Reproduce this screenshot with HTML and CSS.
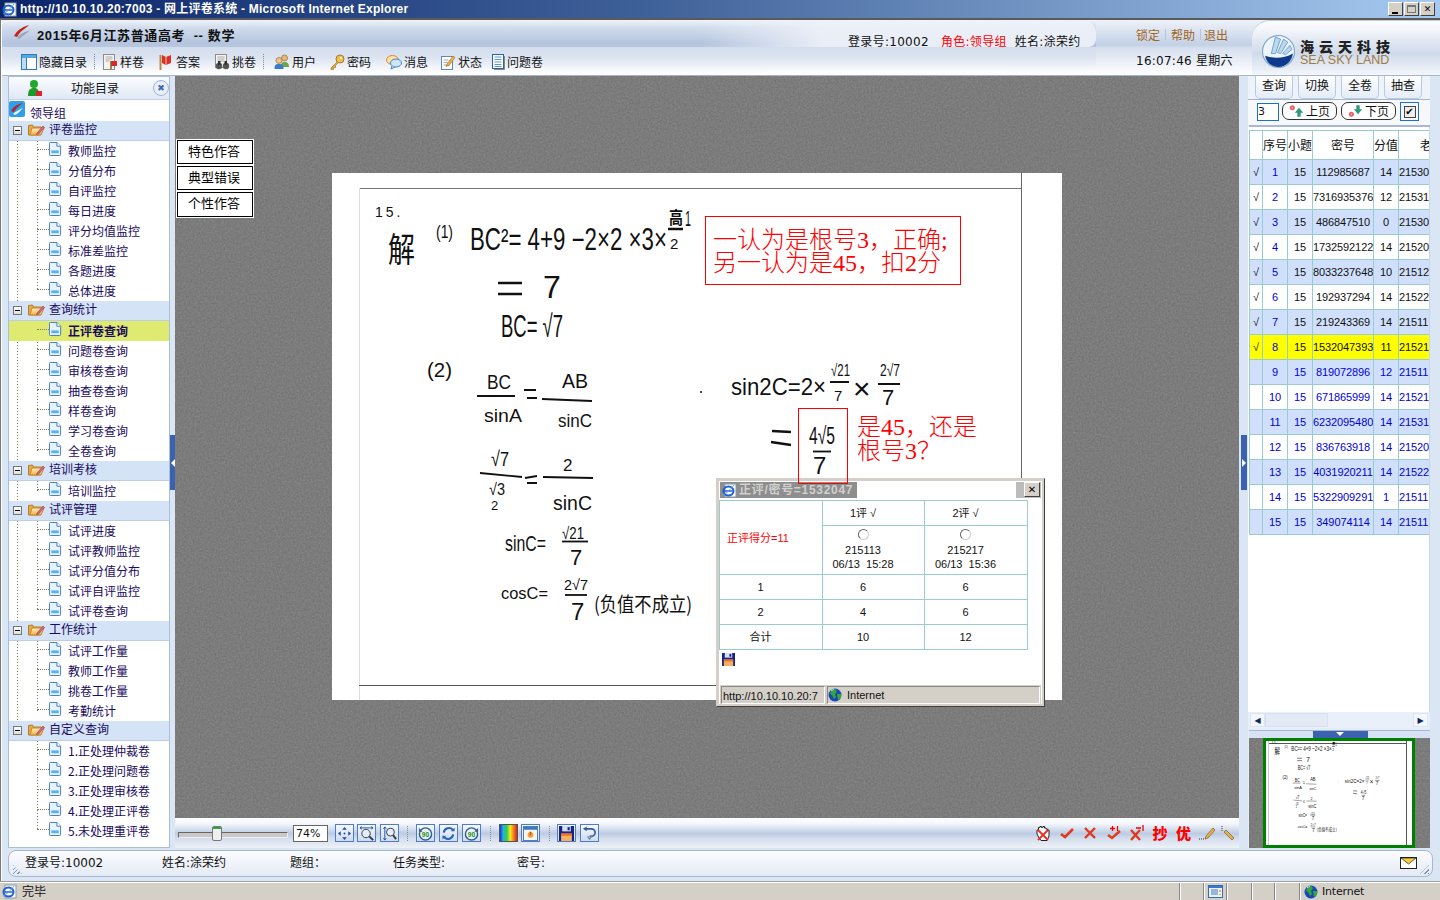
FILE: index.html
```html
<!DOCTYPE html>
<html lang="zh-CN">
<head>
<meta charset="utf-8">
<title>网上评卷系统</title>
<link rel="stylesheet" href="styles.css">
</head>
<body>
<svg class="sprite" aria-hidden="true">
<defs>
<linearGradient id="fo" x1="0" y1="0" x2="0" y2="1"><stop offset="0" stop-color="#fff1b8"/><stop offset="1" stop-color="#f2b04a"/></linearGradient>
<symbol id="doc" viewBox="0 0 14 15"><path d="M1.5.5h7l4 4v9a1 1 0 0 1-1 1h-10a1 1 0 0 1-1-1v-12a1 1 0 0 1 1-1z" fill="#e8f2fc" stroke="#3f78bd"/><path d="M8.500.5v4h4" fill="#fff" stroke="#3f78bd"/><rect x="2.500" y="9" width="8" height="3" fill="#58b0ec"/></symbol>
<symbol id="folder" viewBox="0 0 17 15"><path d="M.5 3.500v9.500h12l1-8h-8l-1-2z" fill="#e9a94a" stroke="#b77a25"/><path d="M2 13l2-7h12l-3 7z" fill="url(#fo)" stroke="#c68a34"/><path d="M9 11l6-7 1.500 1.500-6 6.500-2 .5z" fill="#d75fa8" stroke="#8a4a20" stroke-width=".6"/></symbol>
<symbol id="ie" viewBox="0 0 15 15"><rect x="3" y="1" width="11" height="13" fill="#fff" stroke="#8a97aa"/><ellipse cx="6.500" cy="8" rx="5" ry="4.500" fill="none" stroke="#1c5fd0" stroke-width="2"/><path d="M2.500 8h8" stroke="#1c5fd0" stroke-width="1.500"/><path d="M1 12c3-1 8-6 11-10" fill="none" stroke="#5fa0ee"/></symbol>
<symbol id="globe" viewBox="0 0 14 14"><circle cx="7" cy="7" r="6.500" fill="#1c46b8"/><path d="M3 3l4-2 2 2-2 3 1 3-2 2-2-4-2-1zM9 6l4 0 0 4-3 2z" fill="#31a83a"/><path d="M3 2.500l3-1" stroke="#bfe2ff"/></symbol>
<symbol id="save" viewBox="0 0 14 14"><rect x="0" y="0" width="14" height="14" fill="#14268e"/><rect x="3" y="0" width="8" height="5" fill="#d8e0ee"/><rect x="8" y="1" width="2" height="3" fill="#14268e"/><rect x="2" y="7" width="10" height="7" fill="#f7b05f"/><rect x="2" y="7" width="10" height="2" fill="#f36b1e"/></symbol>
<symbol id="swoosh" viewBox="0 0 18 16"><path d="M1 12C5 5 10 3 16 1 12 5 7 7 4 13z" fill="#c8201c"/><path d="M4 14C8 9 12 8 17 6 13 10 9 12 6 15z" fill="#9aa4b4"/></symbol>
</defs>
</svg>

<header class="ie-title">
  <svg class="ic15"><use href="#ie"/></svg>
  <span class="ie-title-text">http://10.10.10.20:7003 - 网上评卷系统 - Microsoft Internet Explorer</span>
  <div class="winbtns">
    <span class="winbtn"><i class="g-min"></i></span>
    <span class="winbtn"><i class="g-max"></i></span>
    <span class="winbtn g-close">✕</span>
  </div>
</header>

<div class="app">
  <div class="top">
    <div class="top-left">
      <div class="title-row">
        <svg class="t-logo"><use href="#swoosh"/></svg>
        <strong class="exam">2015年6月江苏普通高考 &nbsp;-- 数学</strong>
        <div class="who">
          <span>登录号:10002</span>
          <span class="red">角色:领导组</span>
          <span>姓名:涂荣约</span>
        </div>
      </div>
      <nav class="tool-row">
        <a class="tl w1"><svg viewBox="0 0 16 16"><rect x=".5" y=".5" width="15" height="15" fill="#fff" stroke="#2a7bc0"/><rect x="1" y="1" width="14" height="3" fill="#5aa7df"/><rect x="1" y="4" width="4" height="11" fill="#bcdcf4"/><path d="M5.500 4v11" stroke="#2a7bc0"/></svg>隐藏目录</a>
        <i class="tsep s1"></i>
        <a class="tl w2"><svg viewBox="0 0 16 16"><rect x="1.500" y=".5" width="11" height="15" fill="#f3f3ef" stroke="#8c8c8c"/><path d="M3.500 3h7M3.500 5h7M3.500 7h4" stroke="#aaa"/><path d="M9 7h6v5H9z" fill="#d8282a"/><path d="M9 7v8" stroke="#8a5a20" stroke-width="1.500"/></svg>样卷</a>
        <a class="tl w3"><svg viewBox="0 0 14 16"><path d="M1.500 1v15" stroke="#b98a45" stroke-width="2"/><path d="M3 1l4 2 5-2v8l-5 2-4-2z" fill="#d8322a"/><path d="M7 3v8" stroke="#f2c59a"/></svg>答案</a>
        <a class="tl w4"><svg viewBox="0 0 16 16"><rect x="1.500" y=".5" width="11" height="13" fill="#f3f3ef" stroke="#8c8c8c"/><path d="M3.500 3h7M3.500 5h7M3.500 7h7" stroke="#aaa"/><circle cx="5" cy="12" r="3.200" fill="#555"/><circle cx="12" cy="12" r="3.200" fill="#555"/><rect x="4" y="7" width="2.500" height="4" fill="#333"/><rect x="10.500" y="7" width="2.500" height="4" fill="#333"/></svg>挑卷</a>
        <i class="tsep s2"></i>
        <a class="tl w5"><svg viewBox="0 0 16 16"><circle cx="10.500" cy="4" r="3" fill="#e9b878" stroke="#8a5a20" stroke-width=".6"/><path d="M7 13c0-4 1-5 3.500-5s4.500 1 4.500 5z" fill="#6aa84a"/><circle cx="5" cy="6.500" r="3" fill="#f0c68e" stroke="#8a5a20" stroke-width=".6"/><path d="M.5 15c0-4 1-5 4.500-5s4.500 1 4.500 5z" fill="#3a7bd0"/></svg>用户</a>
        <a class="tl w6"><svg viewBox="0 0 16 16"><circle cx="11" cy="5" r="4" fill="#f1bf4d" stroke="#a8782a"/><circle cx="12" cy="4" r="1" fill="#fff"/><path d="M8 8l-6 6v1.500h2.500v-2h2v-2l3-3" fill="#e8a83a" stroke="#a8782a" stroke-width=".7"/></svg>密码</a>
        <a class="tl w7"><svg viewBox="0 0 16 16"><ellipse cx="6.500" cy="6" rx="6" ry="4.500" fill="#fde1a8" stroke="#d88a3a"/><ellipse cx="10" cy="9" rx="5.500" ry="4" fill="#cfe6fa" stroke="#3a86c8"/><path d="M6 12l-1 3 4-2" fill="#cfe6fa" stroke="#3a86c8"/></svg>消息</a>
        <a class="tl w8"><svg viewBox="0 0 16 16"><rect x="1.500" y="2.500" width="11" height="13" fill="#fff" stroke="#5a8ac0"/><path d="M3.500 6h5M3.500 8.500h4M3.500 11h6" stroke="#9ab"/><path d="M7 10l6-8 2 1.500-6 8-3 1z" fill="#f0b040" stroke="#a86a20" stroke-width=".6"/></svg>状态</a>
        <a class="tl w9"><svg viewBox="0 0 13 16"><rect x=".5" y=".5" width="11" height="14" fill="#fff" stroke="#2a62a8"/><path d="M2.500 3h7M2.500 5.500h7M2.500 8h7M2.500 10.500h7M2.500 12.500h7" stroke="#5a98d8"/><path d="M12.500 2v13.500H2" fill="none" stroke="#888"/></svg>问题卷</a>
      </nav>
    </div>
    <div class="top-right">
      <div class="clock-col">
        <div class="links"><a>锁定</a><i></i><a>帮助</a><i></i><a class="lk-last">退出</a></div>
        <div class="clock">16:07:46 星期六</div>
      </div>
      <div class="brand">
        <svg class="brand-mark" viewBox="0 0 32 33"><circle cx="16" cy="17" r="15.500" fill="#eef4fb" stroke="#7aa0c8"/><path d="M9 19L13 3l5 2-5 14zM15 18l6-13 4 3-7 11zM20 19l7-8 2 4-6 5z" fill="#bcd8ee" stroke="#4a8cc0" stroke-width=".7"/><path d="M3 21c8 3 18 3 27-2-1 8-7 13-14 13S4 27 3 21z" fill="#0d3a8a"/></svg>
        <div class="brand-txt"><b>海云天科技</b><span>SEA SKY LAND</span></div>
      </div>
    </div>
  </div>

  <div class="main">
    <aside class="side">
      <div class="side-head">
        <svg class="side-ic" viewBox="0 0 16 18"><circle cx="7" cy="5" r="4" fill="#1fa82c"/><path d="M1 17c0-6 2-8 6-8s5 2 5 8z" fill="#1a9a28"/><rect x="9" y="12" width="6" height="5" fill="#d9252a"/></svg>
        <span class="side-title">功能目录</span>
        <span class="side-x">✖</span>
      </div>
      <div class="tree">
        <div class="root"><svg class="root-ic" viewBox="0 0 16 16"><rect width="16" height="16" rx="2" fill="#2f9fe8"/><path d="M2 10C5 5 9 3 14 2 10 5 7 7 5 11z" fill="#b8202a"/><path d="M4 13c3-3 6-4 10-6-3 3-5 6-8 7z" fill="#e8f4fc"/></svg>领导组</div>

        <div class="grp"><i class="exp"></i><svg class="fold"><use href="#folder"/></svg><span>评卷监控</span></div>
        <div class="items">
          <div class="item"><svg class="doc"><use href="#doc"/></svg>教师监控</div>
          <div class="item"><svg class="doc"><use href="#doc"/></svg>分值分布</div>
          <div class="item"><svg class="doc"><use href="#doc"/></svg>自评监控</div>
          <div class="item"><svg class="doc"><use href="#doc"/></svg>每日进度</div>
          <div class="item"><svg class="doc"><use href="#doc"/></svg>评分均值监控</div>
          <div class="item"><svg class="doc"><use href="#doc"/></svg>标准差监控</div>
          <div class="item"><svg class="doc"><use href="#doc"/></svg>各题进度</div>
          <div class="item"><svg class="doc"><use href="#doc"/></svg>总体进度</div>
        </div>

        <div class="grp"><i class="exp"></i><svg class="fold"><use href="#folder"/></svg><span>查询统计</span></div>
        <div class="items">
          <div class="item sel"><svg class="doc"><use href="#doc"/></svg>正评卷查询</div>
          <div class="item"><svg class="doc"><use href="#doc"/></svg>问题卷查询</div>
          <div class="item"><svg class="doc"><use href="#doc"/></svg>审核卷查询</div>
          <div class="item"><svg class="doc"><use href="#doc"/></svg>抽查卷查询</div>
          <div class="item"><svg class="doc"><use href="#doc"/></svg>样卷查询</div>
          <div class="item"><svg class="doc"><use href="#doc"/></svg>学习卷查询</div>
          <div class="item"><svg class="doc"><use href="#doc"/></svg>全卷查询</div>
        </div>

        <div class="grp"><i class="exp"></i><svg class="fold"><use href="#folder"/></svg><span>培训考核</span></div>
        <div class="items">
          <div class="item"><svg class="doc"><use href="#doc"/></svg>培训监控</div>
        </div>

        <div class="grp"><i class="exp"></i><svg class="fold"><use href="#folder"/></svg><span>试评管理</span></div>
        <div class="items">
          <div class="item"><svg class="doc"><use href="#doc"/></svg>试评进度</div>
          <div class="item"><svg class="doc"><use href="#doc"/></svg>试评教师监控</div>
          <div class="item"><svg class="doc"><use href="#doc"/></svg>试评分值分布</div>
          <div class="item"><svg class="doc"><use href="#doc"/></svg>试评自评监控</div>
          <div class="item"><svg class="doc"><use href="#doc"/></svg>试评卷查询</div>
        </div>

        <div class="grp"><i class="exp"></i><svg class="fold"><use href="#folder"/></svg><span>工作统计</span></div>
        <div class="items">
          <div class="item"><svg class="doc"><use href="#doc"/></svg>试评工作量</div>
          <div class="item"><svg class="doc"><use href="#doc"/></svg>教师工作量</div>
          <div class="item"><svg class="doc"><use href="#doc"/></svg>挑卷工作量</div>
          <div class="item"><svg class="doc"><use href="#doc"/></svg>考勤统计</div>
        </div>

        <div class="grp"><i class="exp"></i><svg class="fold"><use href="#folder"/></svg><span>自定义查询</span></div>
        <div class="items last">
          <div class="item"><svg class="doc"><use href="#doc"/></svg>1.正处理仲裁卷</div>
          <div class="item"><svg class="doc"><use href="#doc"/></svg>2.正处理问题卷</div>
          <div class="item"><svg class="doc"><use href="#doc"/></svg>3.正处理审核卷</div>
          <div class="item"><svg class="doc"><use href="#doc"/></svg>4.正处理正评卷</div>
          <div class="item"><svg class="doc"><use href="#doc"/></svg>5.未处理重评卷</div>
        </div>
      </div>
    </aside>

    <div class="handle h-left"><i></i></div>

    <section class="center">
      <div class="stage">
        <svg class="noise" aria-hidden="true"><filter id="nz"><feTurbulence type="fractalNoise" baseFrequency=".55" numOctaves="2" seed="4"/><feColorMatrix values="0 0 0 0 .5  0 0 0 0 .5  0 0 0 0 .5  .9 0 0 0 -.2"/></filter><rect width="100%" height="100%" fill="#747474"/><rect width="100%" height="100%" filter="url(#nz)" opacity=".45"/></svg>

        <div class="answer-btns">
          <button class="abtn">特色作答</button>
          <button class="abtn">典型错误</button>
          <button class="abtn">个性作答</button>
        </div>

        <div class="paper">
          <svg class="scan" viewBox="332 173 730 527">
            <path d="M359 188.500H1022" stroke="#777" fill="none"/>
            <path d="M1021.500 173V480" stroke="#666" fill="none"/>
            <path d="M359.500 188V700" stroke="#ddd" fill="none"/>
            <path d="M359 685.500H722" stroke="#555" fill="none"/>
            <g id="hw" class="hw">
              <text x="375" y="217" font-size="14" letter-spacing="3">15.</text>
              <text x="388" y="262" font-size="34" class="cjk" textLength="27" lengthAdjust="spacingAndGlyphs">解</text>
              <text x="436" y="238" font-size="19" textLength="17" lengthAdjust="spacingAndGlyphs">(1)</text>
              <text x="470" y="250" font-size="31" textLength="197" lengthAdjust="spacingAndGlyphs">BC²= 4+9 −2×2 ×3×</text>
              <text x="669" y="224" font-size="17" class="cjk" font-weight="700" textLength="14" lengthAdjust="spacingAndGlyphs">高</text>
              <text x="670" y="249" font-size="15">2</text>
              <text x="685" y="226" font-size="22" textLength="6" lengthAdjust="spacingAndGlyphs">1</text>
              <path d="M668 229h15M498 283h24M498 294h24" stroke="#111" stroke-width="2.500" fill="none"/>
              <text x="543" y="298" font-size="32">7</text>
              <text x="501" y="337" font-size="31" textLength="62" lengthAdjust="spacingAndGlyphs">BC= √7</text>
              <text x="427" y="377" font-size="21" textLength="25" lengthAdjust="spacingAndGlyphs">(2)</text>

              <text x="487" y="389" font-size="21" textLength="24" lengthAdjust="spacingAndGlyphs">BC</text>
              <text x="484" y="422" font-size="19" textLength="38" lengthAdjust="spacingAndGlyphs">sinA</text>
              <text x="562" y="388" font-size="21" textLength="26" lengthAdjust="spacingAndGlyphs">AB</text>
              <text x="558" y="427" font-size="19" textLength="34" lengthAdjust="spacingAndGlyphs">sinC</text>
              <path d="M477 396h38M524 390h12M527 398h10M542 399l50 2" stroke="#111" stroke-width="1.800" fill="none"/>

              <text x="491" y="466" font-size="21" textLength="18" lengthAdjust="spacingAndGlyphs">√7</text>
              <text x="489" y="495" font-size="17" textLength="16" lengthAdjust="spacingAndGlyphs">√3</text>
              <text x="491" y="510" font-size="13">2</text>
              <text x="563" y="471" font-size="17">2</text>
              <text x="553" y="510" font-size="21" textLength="39" lengthAdjust="spacingAndGlyphs">sinC</text>
              <path d="M480 473l42 4M525 478l12-2M527 483h10M543 477l50 1" stroke="#111" stroke-width="1.800" fill="none"/>

              <text x="505" y="551" font-size="22" textLength="41" lengthAdjust="spacingAndGlyphs">sinC=</text>
              <text x="562" y="539" font-size="17" textLength="22" lengthAdjust="spacingAndGlyphs">√21</text>
              <text x="570" y="565" font-size="22">7</text>
              <path d="M562 541.500h26" stroke="#111" stroke-width="1.800"/>

              <text x="501" y="599" font-size="17" textLength="47" lengthAdjust="spacingAndGlyphs">cosC=</text>
              <text x="564" y="590" font-size="15" textLength="24" lengthAdjust="spacingAndGlyphs">2√7</text>
              <text x="571" y="620" font-size="24">7</text>
              <path d="M565 595h22" stroke="#111" stroke-width="1.800"/>
              <text x="594" y="612" font-size="20" class="cjk" textLength="98" lengthAdjust="spacingAndGlyphs">(负值不成立)</text>

              <text x="731" y="395" font-size="24" textLength="95" lengthAdjust="spacingAndGlyphs">sin2C=2×</text>
              <text x="831" y="376" font-size="17" textLength="19" lengthAdjust="spacingAndGlyphs">√21</text>
              <text x="834" y="401" font-size="15">7</text>
              <text x="853" y="399" font-size="30">×</text>
              <text x="880" y="376" font-size="17" textLength="20" lengthAdjust="spacingAndGlyphs">2√7</text>
              <text x="882" y="405" font-size="22">7</text>
              <path d="M830 382h19M878 384h22" stroke="#111" stroke-width="1.800"/>
              <path d="M772 431l19 1M771 442l20 3" stroke="#111" stroke-width="2.500"/>
              <text x="809" y="444" font-size="24" textLength="26" lengthAdjust="spacingAndGlyphs">4√5</text>
              <text x="813" y="474" font-size="24">7</text>
              <path d="M813 451.500h18" stroke="#111" stroke-width="1.800"/>
              <path d="M700 392h2" stroke="#111" stroke-width="1.500"/>
            </g>
          </svg>
          <div class="note note-a">一认为是根号3，正确;<br>另一认为是45，扣2分</div>
          <div class="note-box"></div>
          <div class="note-free">是45，还是<br>根号3？</div>
        </div>

        <div class="popup">
          <div class="pop-title">
            <div class="pop-cap"><svg class="ic15"><use href="#ie"/></svg><b>正评/密号=1532047</b></div>
            <div class="pop-gap"></div>
            <div class="pop-end"><span class="pop-x">✕</span></div>
          </div>
          <div class="pop-body">
            <table class="pop-table">
              <colgroup><col class="pc"><col class="pc2"><col class="pc"></colgroup>
              <tr class="r25"><td rowspan="2" class="score">正评得分=11</td><td>1评 √</td><td>2评 √</td></tr>
              <tr class="r49"><td><i class="radio"></i><br>215113<br>06/13&nbsp; 15:28</td><td><i class="radio"></i><br>215217<br>06/13&nbsp; 15:36</td></tr>
              <tr class="r25"><td>1</td><td>6</td><td>6</td></tr>
              <tr class="r25"><td>2</td><td>4</td><td>6</td></tr>
              <tr class="r25"><td>合计</td><td>10</td><td>12</td></tr>
            </table>
            <svg class="pop-save"><use href="#save"/></svg>
          </div>
          <div class="pop-status">
            <div class="ps1">http://10.10.10.20:7</div>
            <div class="ps2"><svg class="ic13"><use href="#globe"/></svg>Internet</div>
          </div>
        </div>
      </div>

      <div class="bottom-tools">
        <div class="slider"><i class="thumb"></i></div>
        <div class="zoomval">74%</div>
        <span class="tb"><svg viewBox="0 0 16 16"><path d="M8 1l2.500 3h-5zM8 15l2.500-3h-5zM1 8l3-2.500v5zM15 8l-3-2.500v5z" fill="#1f4ea8"/><circle cx="8" cy="8" r="1" fill="#1f4ea8"/></svg></span>
        <span class="tb"><svg viewBox="0 0 16 16"><circle cx="7.500" cy="8" r="4.500" fill="#e2eefb" stroke="#334"/><path d="M11 11l4 4" stroke="#334" stroke-width="2"/><path d="M1 2h14M1 2l2-1.500M1 2l2 1.500M15 2l-2-1.500M15 2l-2 1.500" stroke="#1f4ea8" fill="none"/></svg></span>
        <span class="tb"><svg viewBox="0 0 16 16"><circle cx="9" cy="6.500" r="4.200" fill="#e2eefb" stroke="#334"/><path d="M12 10l3 4" stroke="#334" stroke-width="2"/><path d="M3 1v14M3 1L1.500 3M3 1l1.500 2M3 15l-1.500-2M3 15l1.500-2" stroke="#1f4ea8" fill="none"/></svg></span>
        <i class="bsep b1"></i>
        <span class="tb"><svg viewBox="0 0 16 16"><circle cx="8" cy="8.500" r="6.500" fill="#e8f5e8" stroke="#345a9c" stroke-width="1.500"/><path d="M1 2v4h4z" fill="#345a9c"/><text x="8" y="11.500" class="rot">90</text></svg></span>
        <span class="tb"><svg viewBox="0 0 16 16"><path d="M3 7a5.500 5.500 0 0 1 9.500-3M13 9a5.500 5.500 0 0 1-9.500 3" fill="none" stroke="#2a62b8" stroke-width="2.200"/><path d="M10.500 5.500h4v-4zM5.500 10.500h-4v4z" fill="#2a62b8"/></svg></span>
        <span class="tb"><svg viewBox="0 0 16 16"><circle cx="8" cy="8.500" r="6.500" fill="#e8f5e8" stroke="#345a9c" stroke-width="1.500"/><path d="M15 2v4h-4z" fill="#345a9c"/><text x="8" y="11.500" class="rot">90</text></svg></span>
        <i class="bsep b2"></i>
        <span class="tb rainbow"></span>
        <span class="tb"><svg viewBox="0 0 16 16"><rect x=".5" y=".5" width="15" height="15" fill="#f6f6ea" stroke="#4a78b8"/><rect x="1" y="1" width="14" height="3" fill="#3a78c8"/><circle cx="8" cy="9.500" r="3" fill="#f2a03a"/><path d="M8 6v4" stroke="#c8501a" stroke-width="1.500"/></svg></span>
        <i class="bsep b3"></i>
        <span class="tb"><svg viewBox="0 0 14 14"><use href="#save"/></svg></span>
        <span class="tb"><svg viewBox="0 0 16 16"><path d="M4 3h6a4 4 0 0 1 0 8H8" fill="none" stroke="#345a9c" stroke-width="1.800"/><path d="M5 .5v5L1 3z" fill="#345a9c"/><path d="M6 11l2 3 3-4" fill="none" stroke="#789" stroke-width="1.500"/></svg></span>

        <div class="marks">
          <svg class="mk16" viewBox="0 0 16 16"><path d="M2 9V5h1.500V2.500H5V1.500h1.500v1H8v-1h1.500v1.500H11V4h1.500v1H14v6l-2 4.500H6L3.500 12z" fill="#fff" stroke="#222"/><path d="M3 5l10 10M13 5L3 15" stroke="#e8322a" stroke-width="2"/></svg>
          <svg class="mk16" viewBox="0 0 16 16"><path d="M2 9l4 3 8-8" fill="none" stroke="#e03a1c" stroke-width="2.600"/></svg>
          <svg class="mk16" viewBox="0 0 16 16"><path d="M3 3l10 10M13 3L3 13" stroke="#e03a1c" stroke-width="2.400"/></svg>
          <svg class="mk16" viewBox="0 0 16 16"><path d="M2 10l4 3 8-7" fill="none" stroke="#e03a1c" stroke-width="2.400"/><path d="M4 3.500h5M6.500 1v5M11.500 1v5" stroke="#e00" stroke-width="1.300"/></svg>
          <svg class="mk16" viewBox="0 0 16 16"><path d="M2 5l9 10M11 5L2 15" stroke="#e03a1c" stroke-width="2.400"/><path d="M7 3h5M14 0v6" stroke="#e00" stroke-width="1.300"/></svg>
          <b class="mk-t">抄</b>
          <b class="mk-t">优</b>
          <svg class="mk16 mk-pen" viewBox="0 0 16 16"><path d="M7 11l7-8 2 2-7 8-3 1z" fill="#e8b04a" stroke="#7a5a2a" stroke-width=".7"/><path d="M0 14h5" stroke="#333" stroke-dasharray="1 1"/></svg>
          <svg class="mk16 mk-pen" viewBox="0 0 16 16"><path d="M2 1v6" stroke="#333" stroke-dasharray="1 1"/><path d="M4 7l2-2 8 8-2 2z" fill="#e8b04a" stroke="#7a5a2a" stroke-width=".7"/></svg>
        </div>
      </div>
    </section>

    <div class="handle h-right"><i></i></div>

    <aside class="right">
      <div class="tabs"><span class="tab">查询</span><span class="tab">切换</span><span class="tab">全卷</span><span class="tab">抽查</span></div>
      <div class="pager">
        <span class="pg-in">3</span>
        <span class="pg-btn"><svg viewBox="0 0 18 16"><circle cx="4" cy="4" r="3" fill="#e65a78"/><circle cx="4" cy="4" r="1" fill="#f2d23a"/><path d="M12 4l5 6h-3v5h-4v-5H7z" fill="#2c9a7a"/></svg>上页</span>
        <span class="pg-btn"><svg viewBox="0 0 18 16"><circle cx="4" cy="12" r="3" fill="#e65a78"/><circle cx="4" cy="12" r="1" fill="#f2d23a"/><path d="M12 12l5-6h-3V1h-4v5H7z" fill="#2c9a7a"/></svg>下页</span>
        <span class="pg-chk"><i>✔</i></span>
      </div>
      <div class="rbar"></div>
      <div class="table-wrap">
        <table class="list">
          <colgroup><col class="c1"><col class="c2"><col class="c2"><col class="c3"><col class="c2"><col class="c4"></colgroup>
          <thead><tr><th></th><th>序号</th><th>小题</th><th>密号</th><th>分值</th><th class="teach">老师</th></tr></thead>
          <tbody>
            <tr class="odd"><td>√</td><td class="bl">1</td><td>15</td><td>112985687</td><td>14</td><td class="l">21530</td></tr>
            <tr><td>√</td><td class="bl">2</td><td>15</td><td>7316935376</td><td>12</td><td class="l">21531</td></tr>
            <tr class="odd"><td>√</td><td class="bl">3</td><td>15</td><td>486847510</td><td>0</td><td class="l">21530</td></tr>
            <tr><td>√</td><td class="bl">4</td><td>15</td><td>1732592122</td><td>14</td><td class="l">21520</td></tr>
            <tr class="odd"><td>√</td><td class="bl">5</td><td>15</td><td>8033237648</td><td>10</td><td class="l">21512</td></tr>
            <tr><td>√</td><td class="bl">6</td><td>15</td><td>192937294</td><td>14</td><td class="l">21522</td></tr>
            <tr class="odd"><td>√</td><td class="bl">7</td><td>15</td><td>219243369</td><td>14</td><td class="l">21511</td></tr>
            <tr class="cur"><td>√</td><td class="bl">8</td><td>15</td><td>1532047393</td><td>11</td><td class="l">21521</td></tr>
            <tr class="odd todo"><td></td><td>9</td><td>15</td><td>819072896</td><td>12</td><td class="l">21511</td></tr>
            <tr class="todo"><td></td><td>10</td><td>15</td><td>671865999</td><td>14</td><td class="l">21521</td></tr>
            <tr class="odd todo"><td></td><td>11</td><td>15</td><td>6232095480</td><td>14</td><td class="l">21531</td></tr>
            <tr class="todo"><td></td><td>12</td><td>15</td><td>836763918</td><td>14</td><td class="l">21520</td></tr>
            <tr class="odd todo"><td></td><td>13</td><td>15</td><td>4031920211</td><td>14</td><td class="l">21522</td></tr>
            <tr class="todo"><td></td><td>14</td><td>15</td><td>5322909291</td><td>1</td><td class="l">21511</td></tr>
            <tr class="odd todo"><td></td><td>15</td><td>15</td><td>349074114</td><td>14</td><td class="l">21511</td></tr>
          </tbody>
        </table>
      </div>
      <div class="hscroll">
        <span class="sb-btn">◀</span><span class="sb-thumb"></span><span class="sb-fill"></span><span class="sb-btn">▶</span>
      </div>
      <div class="split"><i></i></div>
      <div class="thumbview">
        <svg class="noise" aria-hidden="true"><rect width="100%" height="100%" fill="#747474"/><rect width="100%" height="100%" filter="url(#nz)" opacity=".45"/></svg>
        <div class="thumbframe">
          <svg class="mini" viewBox="1266 741 146 104">
            <path d="M1269 743.500H1407M1406.500 741V845" stroke="#555" fill="none"/>
            <path d="M1268.500 741V845" stroke="#ccc" fill="none"/>
            <g transform="translate(1195,696) scale(.205,.22)"><use href="#hw"/></g>
          </svg>
        </div>
      </div>
    </aside>
  </div>

  <footer class="info">
    <span class="grip"></span>
    <span class="i1">登录号:10002</span>
    <span class="i2">姓名:涂荣约</span>
    <span class="i3">题组：</span>
    <span class="i4">任务类型:</span>
    <span class="i5">密号:</span>
    <svg class="mail" viewBox="0 0 17 12"><rect x=".5" y=".5" width="16" height="11" fill="#fff" stroke="#222"/><path d="M1 1l7.500 6L16 1z" fill="#f4cf3a" stroke="#222" stroke-width=".7"/></svg>
    <span class="grip"></span>
  </footer>
</div>

<div class="ie-status">
  <svg class="ic15"><use href="#ie"/></svg>
  <span class="done">完毕</span>
  <span class="sp p1"></span>
  <span class="sp p2"><svg viewBox="0 0 15 13"><rect x=".5" y=".5" width="14" height="12" fill="#e8f0fb" stroke="#3a6ab0"/><rect x="1" y="1" width="13" height="2" fill="#3a78c8"/><path d="M3 5h7M3 7h7M3 9h7" stroke="#4a78b8"/><path d="M12 5v2M12 9v1" stroke="#e89a1a" stroke-width="1.500"/></svg></span>
  <span class="sp p3"></span>
  <span class="sp p4"></span>
  <span class="sp p5"></span>
  <span class="sp p6"><svg class="ic13"><use href="#globe"/></svg>Internet</span>
</div>
</body>
</html>
```

FILE: styles.css
```css
*{box-sizing:border-box}
html,body{margin:0;height:100%}
body{width:1440px;height:900px;overflow:hidden;display:flex;flex-direction:column;font:12px/1.2 "DejaVu Sans","Noto Sans CJK SC",sans-serif;color:#111;background:#d4d0c8}
.sprite{position:absolute;width:0;height:0}
.ic15{width:15px;height:15px;flex:none}
.ic13{width:14px;height:14px;flex:none}

/* IE chrome */
.ie-title{height:18px;flex:none;display:flex;align-items:center;padding-left:2px;gap:3px;background:linear-gradient(90deg,#0a246a 0,#3f6199 45%,#a6caf0 100%);color:#fff}
.ie-title-text{font:700 12px/1 "Liberation Sans","Noto Sans CJK SC",sans-serif;letter-spacing:.23px}
.winbtns{margin-left:auto;margin-right:5px;display:flex;gap:1px}
.winbtn{width:15px;height:14px;background:#d4d0c8;border:1px solid;border-color:#fff #404040 #404040 #fff;display:flex;align-items:center;justify-content:center;color:#000;position:relative}
.g-min{width:6px;height:2px;background:#000;margin-top:7px;margin-right:2px}
.g-max{width:9px;height:8px;border:1px solid #777;border-top-width:2px}
.g-close{font:700 9px/1 "DejaVu Sans",sans-serif}

.app{flex:1;display:flex;flex-direction:column;background:#dbe6f5;border-top:2px solid #5a5a5a;border-left:1px solid #777;box-shadow:inset 1px 0 #fff;min-height:0;height:862px}
.top{height:56px;flex:none;display:flex;border-bottom:1px solid #a7b5cb;margin-left:1px}
.top-left{width:1094px;display:flex;flex-direction:column}
.title-row{height:27px;display:flex;align-items:center;background:linear-gradient(#eff3fa 0,#d0dbec 30%,#b5c5df 85%,#b8c7e0 100%);position:relative;padding-left:11px}
.title-row::after{content:"";position:absolute;left:700px;right:0;top:1px;bottom:0;background:linear-gradient(90deg,transparent,#eef2f9 30%,#eef2f9);border-radius:0 12px 8px 0;opacity:.9}
.t-logo{width:18px;height:16px;margin-top:-3px}
.exam{margin:3px 0 0 6px;font:700 13px/1 "Liberation Sans","Noto Sans CJK SC",sans-serif;letter-spacing:.62px}
.who{position:absolute;z-index:1;left:846px;top:15px;display:flex;gap:12px;white-space:nowrap;letter-spacing:.3px}
.who span:last-child{margin-left:-4px}
.red{color:#f00}
.tool-row{height:28px;display:flex;align-items:center;position:relative;background:linear-gradient(#d3ddec 0,#dbe3f0 35%,#fdfdfe 92%,#fff 100%)}
.tl{position:absolute;top:7px;display:flex;align-items:center;gap:2px;white-space:nowrap;font:12px/16px "Noto Sans CJK SC",sans-serif;color:#111}
.tl svg{width:16px;height:16px;flex:none;margin-top:-1px}
.w1{left:19px}.w2{left:100px}.w3{left:156px}.w4{left:212px}.w5{left:272px}.w6{left:327px}.w7{left:384px}.w8{left:438px}.w9{left:490px}
.w9 svg{width:13px}
.tsep{position:absolute;top:7px;height:15px;border-left:1px dotted #889}
.s1{left:92px}.s2{left:261px}

.top-right{flex:1;display:flex;position:relative;background:linear-gradient(#eef2f9 0,#c3d1e6 45%,#d7e0ee 52%,#fbfcfe 96%,#fff 100%)}
.clock-col{width:156px;padding:7px 0 0 40px;flex:none}
.links{display:flex;align-items:center;gap:5px;height:15px;font:12px/15px "Noto Sans CJK SC",sans-serif;color:#a0651c;white-space:nowrap}
.links i{width:1px;height:11px;background:#b8c3d8}
.lk-last{margin-left:-2px}
.clock{margin-top:12px;white-space:nowrap;font-size:12px;letter-spacing:.25px}
.brand{flex:1;display:flex;gap:5px;padding:13px 0 0 10px;border-top-left-radius:18px;background:linear-gradient(#fdfdfe 0,#f0f3f9 20%,#cfdaea 60%,#f3f6fb 100%);border-top:1px solid #c0cce0}
.brand-mark{width:33px;height:34px;flex:none}
.brand-txt{display:flex;flex-direction:column;line-height:1;padding-top:5px}
.brand-txt b{font:900 14px/15px "Noto Sans CJK SC",sans-serif;color:#222;letter-spacing:5px;white-space:nowrap}
.brand-txt span{font:12.5px/15px "Liberation Sans",sans-serif;color:#a07a46;white-space:nowrap;margin-top:-1px}

.main{height:772px;flex:none;display:flex;padding-left:7px}
/* sidebar */
.side{width:162px;flex:none;display:flex;flex-direction:column;border:1px solid #a9bedb;background:#fff}
.side-head{height:23px;flex:none;display:flex;align-items:center;position:relative;background:linear-gradient(#fbfcfe,#dfe8f5);border-bottom:1px solid #c4d3e8}
.side-ic{width:16px;height:18px;margin-left:18px}
.side-title{margin:-2px 0 0 28px;font:12px "Noto Sans CJK SC",sans-serif}
.side-x{position:absolute;right:0;top:3px;width:16px;height:16px;border-radius:50%;background:#e9eef7;border:1px solid #9db6d8;color:#3d6aa8;font:9px/14px "DejaVu Sans",sans-serif;text-align:center}
.tree{flex:1;font:12px/20px "Noto Sans CJK SC",sans-serif;color:#1a0a60}
.root{height:21px;display:flex;align-items:flex-end;position:relative;padding-left:21px;line-height:16px}
.root-ic{position:absolute;left:0;top:1px;width:16px;height:16px}
.grp{height:20px;background:#d5e3f7;border-bottom:1px solid #bccde6;display:flex;align-items:center;position:relative}
.exp{position:absolute;left:4px;top:5px;width:9px;height:9px;border:1px solid #777;background:linear-gradient(#fff,#ddd)}
.exp::after{content:"";position:absolute;left:1px;right:1px;top:3px;height:1px;background:#000}
.fold{position:absolute;left:19px;top:1px;width:17px;height:15px}
.grp span{margin-left:40px;margin-top:-4px;line-height:16px}
.items{background-image:repeating-linear-gradient(#8a7a60 0 1px,transparent 1px 3px),repeating-linear-gradient(#8a7a60 0 1px,transparent 1px 3px);background-size:1px 100%,1px calc(100% - 10px);background-position:8px 0,28px 0;background-repeat:no-repeat}
.items.last{background-image:repeating-linear-gradient(#8a7a60 0 1px,transparent 1px 3px);background-size:1px calc(100% - 10px);background-position:28px 0}
.item{height:20px;padding-left:59px;position:relative;white-space:nowrap}
.item::before{content:"";position:absolute;left:28px;width:12px;top:8px;border-top:1px dotted #8a7a60}
.doc{position:absolute;left:40px;top:1px;width:13px;height:14px}
.sel{background:#dfeb70;font-weight:700}

.handle{display:flex;align-items:center;flex:none;background:#dbe6f5}
.handle i{display:block;height:55px;width:100%;background:#3a62ae;position:relative}
.handle i::after{content:"";position:absolute;top:24px;border:4px solid transparent}
.h-left{width:5px}
.h-left i::after{left:-3px;border-right-color:#fff}
.h-right{width:9px;padding:0 1px 0 2px}
.h-right i::after{left:1px;border-left-color:#fff}

.center{width:1064px;flex:none;display:flex;flex-direction:column}
.stage{flex:1;position:relative;overflow:hidden}
.noise{position:absolute;left:0;top:0;width:100%;height:100%}
.answer-btns{position:absolute;left:2px;top:64px;display:flex;flex-direction:column;gap:2px;z-index:2}
.abtn{width:76px;height:24px;margin:0;padding:0 2px 2px 0;background:#fff;border:1px solid #000;outline:1px solid #fff;font:13px/18px "Noto Sans CJK SC",sans-serif;color:#000}
.abtn:last-child{height:25px;padding-bottom:3px}

.paper{position:absolute;left:157px;top:97px;width:730px;height:527px;background:#fff}
.scan{position:absolute;inset:0;width:100%;height:100%}
.hw text{font-family:"Liberation Sans","Noto Sans CJK SC",sans-serif;fill:#111}
.hw .cjk{font-family:"Noto Sans CJK SC",sans-serif}
.note{position:absolute;left:373px;top:43px;width:256px;height:69px;border:1px solid #f00;padding:12px 0 0 7px;color:#f00;font:300 24px/23px "Liberation Serif","Noto Sans CJK SC",serif;white-space:nowrap;overflow:hidden}
.note-box{position:absolute;left:466px;top:235px;width:50px;height:76px;border:1px solid #f00;z-index:5}
.note-free{position:absolute;left:525px;top:242px;color:#f00;font:300 24px/24px "Liberation Serif","Noto Sans CJK SC",serif;white-space:nowrap}

.popup{position:absolute;left:541px;top:402px;width:329px;height:229px;background:#fff;border:1px solid;border-color:#d4d0c8 #404040 #404040 #d4d0c8;display:flex;flex-direction:column;padding:3px 2px 1px;box-shadow:inset 0 0 0 2px #d4d0c8;z-index:2}
.pop-title{height:16px;flex:none;display:flex;margin:0 1px}
.pop-cap{width:137px;background:#8e8e8e;display:flex;align-items:center;gap:2px;overflow:hidden;padding-left:2px}
.pop-cap b{color:#d0d0d0;font:700 12px/1 "Liberation Sans","Noto Sans CJK SC",sans-serif;white-space:nowrap;letter-spacing:.7px}
.pop-gap{flex:1;background:#fff}
.pop-end{width:25px;background:#bcbcbc;display:flex;justify-content:flex-end;padding-right:1px}
.pop-x{width:16px;height:15px;background:#d4d0c8;border:1px solid;border-color:#fff #404040 #404040 #fff;font:700 10px/13px "DejaVu Sans",sans-serif;text-align:center;color:#000}
.pop-body{flex:1;padding:2px 0 0;background:#fff}
.pop-table{border-collapse:collapse;table-layout:fixed;width:308px;font:11px/14px "Liberation Sans","Noto Sans CJK SC",sans-serif;text-align:center}
.pc{width:103px}.pc2{width:102px}
.pop-table td{border:1px solid #99cccc;padding:0 21px 0 0}
.r25{height:25px}.r49{height:49px}
.pop-table td.score{color:#f00;text-align:left;padding:0 0 0 7px}
.radio{display:inline-block;width:11px;height:11px;border-radius:50%;border:1px solid #666;border-right-color:#ccc;border-bottom-color:#ccc;vertical-align:top}
.pop-save{display:block;width:13px;height:13px;margin:3px 0 0 3px}
.pop-status{height:20px;flex:none;background:#d4d0c8;display:flex;gap:2px;padding:1px;font:11px/18px "Liberation Sans",sans-serif;margin:0 1px}
.ps1{width:104px;border:1px solid;border-color:#888 #fff #fff #888;padding-left:1px;white-space:nowrap}
.ps2{flex:1;border:1px solid;border-color:#888 #fff #fff #888;display:flex;align-items:center;gap:5px;padding-left:0}

.bottom-tools{height:30px;flex:none;display:flex;align-items:center;position:relative;background:linear-gradient(#fff 0,#f2f5fb 20%,#bccbe3 52%,#d6dfee 70%,#eef2f8 100%)}
.slider{position:absolute;left:3px;top:14px;width:110px;height:6px;background:#c9c9c9;border:1px solid;border-color:#666 #eee #eee #666}
.thumb{position:absolute;left:33px;top:-7px;width:10px;height:15px;border-radius:2px;background:linear-gradient(#2fa83a 0 2px,#f0f0f0 2px 13px,#2fa83a 13px);border:1px solid #777}
.zoomval{position:absolute;left:118px;top:7px;width:35px;height:17px;background:#fff;border:1px solid #666;padding-left:2px;font:11px/15px "DejaVu Sans",sans-serif}
.tb{position:absolute;top:6px;width:19px;height:18px;border:1px solid #4d7ec4;background:linear-gradient(#f4f7fc,#cfdcee);display:flex;align-items:center;justify-content:center}
.tb svg{width:15px;height:15px}
.tb:nth-of-type(1){left:160px}.tb:nth-of-type(2){left:182px}.tb:nth-of-type(3){left:205px}
.tb:nth-of-type(4){left:241px}.tb:nth-of-type(5){left:264px}.tb:nth-of-type(6){left:287px}
.tb:nth-of-type(7){left:324px}.tb:nth-of-type(8){left:346px}.tb:nth-of-type(9){left:382px}.tb:nth-of-type(10){left:405px}
.rainbow{background:linear-gradient(90deg,#2030d8,#20b8e0,#30d040,#f8e820,#f08020,#e02020);border-color:#555}
.rot{font:700 7px/1 "Liberation Sans",sans-serif;fill:#1a8a30;text-anchor:middle}
.bsep{position:absolute;top:8px;height:15px;border-left:1px dotted #889}
.b1{left:232px}.b2{left:315px}.b3{left:374px}
.marks{position:absolute;left:860px;top:7px;display:flex;align-items:center;gap:7.500px}
.mk16{width:16px;height:16px;flex:none}
.mk-t{color:#f00;font:900 15px/16px "Noto Sans CJK SC",sans-serif;width:16px;flex:none}
.mk-pen{margin-left:-1px;margin-right:-1px}

/* right */
.right{width:182px;flex:none;display:flex;flex-direction:column;background:#e6edf8}
.tabs{height:24px;flex:none;display:flex;gap:5px;padding-left:7px;background:#eef3fa;border-bottom:1px solid #a7b5cb}
.tab{width:38px;height:23px;border:1px solid #b8cae3;border-top:0;border-radius:0 0 5px 5px;background:linear-gradient(#fff,#e4ecf7);text-align:center;font:12px/17px "Noto Sans CJK SC",sans-serif}
.pager{height:25px;flex:none;display:flex;align-items:flex-start;padding:2px 0 0 9px;background:#f6f8fc;position:relative}
.pg-in{width:22px;height:18px;border:1px solid #1a6fd0;background:#fff;margin-top:1px;font:11px/16px "DejaVu Sans",sans-serif}
.pg-btn{width:55px;height:18px;margin-left:3px;border:1px solid #333;border-radius:7px;background:#fff;display:flex;align-items:center;gap:2px;padding-left:6px;font:12px/16px "Noto Sans CJK SC",sans-serif}
.pg-btn + .pg-btn{margin-left:4px}
.pg-btn svg{width:15px;height:14px;flex:none}
.pg-chk{width:19px;height:19px;margin-left:4px;border:1px solid #1a6fd0;display:flex;align-items:center;justify-content:center}
.pg-chk i{width:12px;height:12px;border:1px solid #444;background:#eee;font:normal 700 10px/10px "DejaVu Sans",sans-serif;color:#000;text-align:center}
.rbar{height:2px;flex:none;background:#a8b8d0;margin-left:1px}
.table-wrap{flex:1;overflow:hidden;background:#fff;padding:3px 0 0 1px;min-height:0;border-right:1px solid #c8d6ea}
.list{border-collapse:collapse;table-layout:fixed;width:215px;font:11px/14px "Liberation Sans","Noto Sans CJK SC",sans-serif;text-align:center;letter-spacing:-.1px}
.c1{width:13px}.c2{width:25px}.c3{width:61px}.c4{width:66px}
.list th,.list td{border:1px solid #99cccc;padding:0;height:25px;white-space:nowrap;overflow:hidden}
.list th{height:29px;font:12px/14px "Noto Sans CJK SC",sans-serif;background:#fff}
.list th.teach{text-align:left;padding-left:21px}
.odd td{background:#d0e0fc}
.list td.l{text-align:left}
.list td.bl,.todo td{color:#0000d8}
.cur td{background:#ff0}
.hscroll{height:16px;flex:none;display:flex;background:#eaf0f9;margin:0 1px;padding:1px}
.sb-btn{width:15px;height:14px;color:#0a2a60;font:8px/14px "DejaVu Sans",sans-serif;text-align:center;background:#f3f6fb;border:1px solid #dbe4f2}
.sb-thumb{width:63px;background:#e4eaf5;border:1px solid #d3e1f2}
.sb-fill{flex:1}
.split{height:8px;flex:none;margin:2px 0 0 1px;background:#d7e3f4;border-top:1px solid #a8b8d0;display:flex;justify-content:center}
.split i{width:55px;background:#3a62ae;position:relative;margin-left:1px}
.split i::after{content:"";position:absolute;left:23px;top:1px;border:4px solid transparent;border-top-color:#fff;border-bottom-width:0}
.thumbview{height:110px;flex:none;position:relative;margin-left:1px;overflow:hidden}
.thumbframe{position:absolute;left:14px;top:0;width:152px;height:110px;border:3px solid #008000;background:#fff}
.mini{display:block;width:146px;height:104px}

/* info */
.info{height:27px;flex:none;margin:2px 7px 0 7px;border:1px solid #a8b8d0;border-radius:8px;background:linear-gradient(#fbfcfe,#e4eaf4);display:flex;align-items:center;position:relative;white-space:nowrap;font-size:12px}
.info > span{position:absolute;top:5px}
.i1{left:16px}.i2{left:153px}.i3{left:281px}.i4{left:384px}.i5{left:508px}
.grip{width:9px;height:9px;top:14px!important;left:4px;background:repeating-linear-gradient(135deg,#7e96b8 0 1px,transparent 1px 3px);clip-path:polygon(0 100%,100% 100%,0 0)}
.grip:last-of-type{left:auto;right:3px;clip-path:polygon(100% 0,100% 100%,0 100%)}
.mail{position:absolute;left:1391px;top:6px;width:17px;height:12px}

.ie-status{height:19px;flex:none;display:flex;align-items:center;padding-left:2px;background:#d4d0c8;border-top:1px solid #a0a0a0;box-shadow:inset 0 1px #fff;font:11px/1 "DejaVu Sans","Noto Sans CJK SC",sans-serif;position:relative}
.done{margin-left:5px;font:12px/1 "Noto Sans CJK SC",sans-serif}
.sp{position:absolute;top:1px;height:17px;border-left:1px solid #fff;box-shadow:-1px 0 #888;display:flex;align-items:center}
.p1{left:1180px}.p2{left:1204px;padding-left:3px}.p3{left:1227px}.p4{left:1252px}.p5{left:1275px}
.p6{left:1300px;gap:4px;padding-left:3px;letter-spacing:-.2px}
.p2 svg{width:15px;height:13px}
```
